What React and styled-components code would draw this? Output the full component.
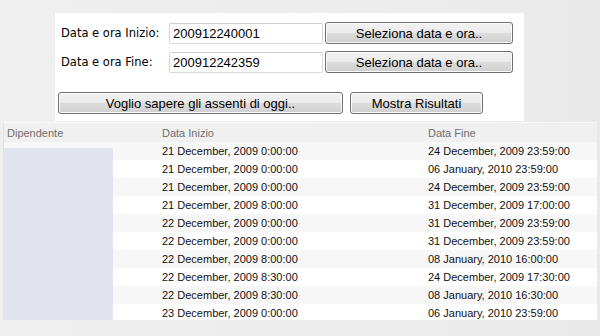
import styled, { createGlobalStyle } from 'styled-components';

const rows = [
  ['21 December, 2009 0:00:00', '24 December, 2009 23:59:00'],
  ['21 December, 2009 0:00:00', '06 January, 2010 23:59:00'],
  ['21 December, 2009 0:00:00', '24 December, 2009 23:59:00'],
  ['21 December, 2009 8:00:00', '31 December, 2009 17:00:00'],
  ['22 December, 2009 0:00:00', '31 December, 2009 23:59:00'],
  ['22 December, 2009 0:00:00', '31 December, 2009 23:59:00'],
  ['22 December, 2009 8:00:00', '08 January, 2010 16:00:00'],
  ['22 December, 2009 8:30:00', '24 December, 2009 17:30:00'],
  ['22 December, 2009 8:30:00', '08 January, 2010 16:30:00'],
  ['23 December, 2009 0:00:00', '06 January, 2010 23:59:00'],
];

const GlobalStyle = createGlobalStyle`
  html, body {
    margin: 0;
    padding: 0;
  }
  body {
    background: linear-gradient(90deg, #efefef 0%, #ececec 70%, #e9e9e9 100%);
    font-family: "Liberation Sans", Arial, sans-serif;
    width: 600px;
    height: 336px;
    overflow: hidden;
  }
`;

function App() {
  return (
    <>
      <GlobalStyle />
      <Page>
        <Panel>
          <FieldRow>
            <Label>Data e ora Inizio:</Label>
            <TextInput defaultValue="200912240001" />
            <Button $width={188}>Seleziona data e ora..</Button>
          </FieldRow>
          <FieldRow>
            <Label>Data e ora Fine:</Label>
            <TextInput defaultValue="200912242359" />
            <Button $width={188}>Seleziona data e ora..</Button>
          </FieldRow>
          <ActionRow>
            <Button $width={285}>Voglio sapere gli assenti di oggi..</Button>
            <Button $width={133}>Mostra Risultati</Button>
          </ActionRow>
        </Panel>

        <Table>
          <HeaderRow>
            <HeadCell>Dipendente</HeadCell>
            <HeadCell>Data Inizio</HeadCell>
            <HeadCell>Data Fine</HeadCell>
          </HeaderRow>
          <Body>
            <EmployeeCell />
            {rows.map(([start, end], i) => (
              <Row key={i} $index={i}>
                <Cell />
                <Cell>{start}</Cell>
                <Cell>{end}</Cell>
              </Row>
            ))}
          </Body>
        </Table>
      </Page>
    </>
  );
}
export default App;

const Page = styled.div`
  padding-top: 13px;
  display: flex;
  flex-direction: column;
`;

const Panel = styled.div`
  margin-left: 55px;
  width: 469px;
  height: 108px;
  box-sizing: border-box;
  padding-top: 9px;
  background: #ffffff;
  display: flex;
  flex-direction: column;
  gap: 7px;
`;

const FieldRow = styled.div`
  display: flex;
  align-items: center;
  height: 22px;
  padding-left: 6px;
`;

const Label = styled.div`
  width: 108px;
  font-family: "DejaVu Sans", Verdana, sans-serif;
  font-size: 11.5px;
  color: #000;
`;

const TextInput = styled.input`
  width: 154px;
  height: 21px;
  box-sizing: border-box;
  margin: 0 2px 0 0;
  padding: 0 3px;
  border: 1px solid #dadada;
  border-top-color: #cfcfcf;
  border-radius: 2px;
  font-family: "Liberation Sans", Arial, sans-serif;
  font-size: 13px;
  color: #000;
  outline: none;
`;

const Button = styled.button`
  width: ${(p) => p.$width}px;
  height: 22px;
  box-sizing: border-box;
  margin: 0;
  padding: 0;
  border: 1px solid #707070;
  border-radius: 3px;
  background: linear-gradient(#f2f2f2 0%, #ebebeb 50%, #dddddd 50%, #cfcfcf 100%);
  box-shadow: inset 0 0 0 1px #fbfbfb;
  font-family: "Liberation Sans", Arial, sans-serif;
  font-size: 13px;
  color: #000;
  text-align: center;
`;

const ActionRow = styled.div`
  display: flex;
  gap: 7px;
  margin-top: 12px;
  padding-left: 3px;
`;

const Table = styled.div`
  margin: 1px 0 0 3px;
  width: 594px;
  height: 198px;
  box-sizing: border-box;
  border-left: 1px solid #e2e2e2;
  border-top: 1px solid #f8f8f8;
  background: #ffffff;
  overflow: hidden;
  font-size: 11px;
`;

const HeaderRow = styled.div`
  display: grid;
  grid-template-columns: 155px 266px 1fr;
  height: 19px;
  align-items: center;
  background: #f0f0f0;
`;

const HeadCell = styled.div`
  padding-left: 3px;
  color: #6f6f6f;
`;

const Body = styled.div`
  display: grid;
  grid-template-columns: 155px 1fr;
  grid-auto-rows: 18px;
`;

const EmployeeCell = styled.div`
  grid-column: 1;
  grid-row: 1 / span 10;
  z-index: 1;
  width: 109px;
  margin-top: 6px;
  background: #e1e4ee;
`;

const Row = styled.div`
  grid-column: 1 / -1;
  grid-row: ${(p) => p.$index + 1};
  display: grid;
  grid-template-columns: 155px 266px 1fr;
  align-items: center;
  background: ${(p) => (p.$index % 2 === 0 ? '#f7f7f7' : '#ffffff')};
`;

const Cell = styled.div`
  padding-left: 3px;
  color: #111111;
  white-space: nowrap;
`;
